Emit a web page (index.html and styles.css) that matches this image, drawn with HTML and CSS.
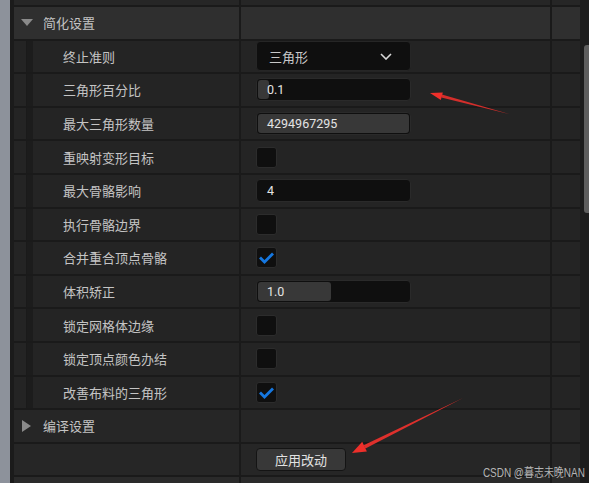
FILE: index.html
```html
<!DOCTYPE html>
<html lang="zh">
<head>
<meta charset="utf-8">
<title>简化设置</title>
<link rel="stylesheet" href="styles.css">
</head>
<body>
<div class="app">
  <div class="sidebar"></div>
  <div class="panel">
    <div class="row strip"><div class="cell"></div><div class="cell"></div><div class="cell"></div></div>

    <div class="row cat">
      <div class="cell name">
        <span class="tw"><svg width="12" height="7" viewBox="0 0 12 7"><polygon points="0,0 12,0 6,7" fill="#8a8a8a"/></svg></span>
        <span class="cat-text">简化设置</span>
      </div>
      <div class="cell"></div><div class="cell"></div>
    </div>

    <div class="row child">
      <div class="cell name"><span class="indent"></span><span class="guide"></span><span class="label">终止准则</span></div>
      <div class="cell val">
        <div class="combo"><span>三角形</span><svg width="12" height="7" viewBox="0 0 12 7"><polyline points="1,1 6,6 11,1" fill="none" stroke="#d8d8d8" stroke-width="1.6"/></svg></div>
      </div>
      <div class="cell"></div>
    </div>

    <div class="row child">
      <div class="cell name"><span class="indent"></span><span class="guide"></span><span class="label">三角形百分比</span></div>
      <div class="cell val"><div class="field"><span class="fill" style="width:11px"></span><span class="num">0.1</span></div></div>
      <div class="cell"></div>
    </div>

    <div class="row child">
      <div class="cell name"><span class="indent"></span><span class="guide"></span><span class="label">最大三角形数量</span></div>
      <div class="cell val"><div class="field"><span class="fill" style="width:151px"></span><span class="num">4294967295</span></div></div>
      <div class="cell"></div>
    </div>

    <div class="row child">
      <div class="cell name"><span class="indent"></span><span class="guide"></span><span class="label">重映射变形目标</span></div>
      <div class="cell val"><div class="check"></div></div>
      <div class="cell"></div>
    </div>

    <div class="row child">
      <div class="cell name"><span class="indent"></span><span class="guide"></span><span class="label">最大骨骼影响</span></div>
      <div class="cell val"><div class="field"><span class="num">4</span></div></div>
      <div class="cell"></div>
    </div>

    <div class="row child">
      <div class="cell name"><span class="indent"></span><span class="guide"></span><span class="label">执行骨骼边界</span></div>
      <div class="cell val"><div class="check"></div></div>
      <div class="cell"></div>
    </div>

    <div class="row child">
      <div class="cell name"><span class="indent"></span><span class="guide"></span><span class="label">合并重合顶点骨骼</span></div>
      <div class="cell val"><div class="check"><svg width="21" height="21" viewBox="0 0 21 21"><polyline points="4,10.5 8.5,15 17,6.5" fill="none" stroke="#1577e0" stroke-width="2.8" stroke-linejoin="miter"/></svg></div></div>
      <div class="cell"></div>
    </div>

    <div class="row child">
      <div class="cell name"><span class="indent"></span><span class="guide"></span><span class="label">体积矫正</span></div>
      <div class="cell val"><div class="field"><span class="fill" style="width:73px"></span><span class="num">1.0</span></div></div>
      <div class="cell"></div>
    </div>

    <div class="row child">
      <div class="cell name"><span class="indent"></span><span class="guide"></span><span class="label">锁定网格体边缘</span></div>
      <div class="cell val"><div class="check"></div></div>
      <div class="cell"></div>
    </div>

    <div class="row child">
      <div class="cell name"><span class="indent"></span><span class="guide"></span><span class="label">锁定顶点颜色办结</span></div>
      <div class="cell val"><div class="check"></div></div>
      <div class="cell"></div>
    </div>

    <div class="row child">
      <div class="cell name"><span class="indent"></span><span class="guide"></span><span class="label">改善布料的三角形</span></div>
      <div class="cell val"><div class="check"><svg width="21" height="21" viewBox="0 0 21 21"><polyline points="4,10.5 8.5,15 17,6.5" fill="none" stroke="#1577e0" stroke-width="2.8" stroke-linejoin="miter"/></svg></div></div>
      <div class="cell"></div>
    </div>

    <div class="row cat2">
      <div class="cell name">
        <span class="tw"><svg width="9" height="12" viewBox="0 0 9 12"><polygon points="0,0 9,6 0,12" fill="#8a8a8a"/></svg></span>
        <span class="cat-text">编译设置</span>
      </div>
      <div class="cell"></div><div class="cell"></div>
    </div>

    <div class="row action">
      <div class="cell"></div>
      <div class="cell val"><button class="apply">应用改动</button></div>
      <div class="cell"></div>
    </div>

    <div class="row tail"><div class="cell"></div><div class="cell"></div><div class="cell"></div></div>
  </div>
  <div class="scroll"><div class="thumb"></div></div>
</div>

<svg class="arrows" width="589" height="483" viewBox="0 0 589 483">
  <polygon points="510,114.3 441.9,94.6 441.3,97.4" fill="#e8302c" opacity="0.9"/>
  <polygon points="430,93 442.8,92.4 440.8,99.9" fill="#ee2f2a"/>
  <polygon points="463,398 363.6,445.3 365.4,448.6" fill="#e8302c" opacity="0.95"/>
  <polygon points="352,453 362.2,441.8 366.9,451.5" fill="#ee2f2a"/>
</svg>
<div class="watermark">CSDN @暮志未晚NAN</div>
</body>
</html>
```

FILE: styles.css
```css
html, body {
  margin: 0;
  padding: 0;
}
body {
  width: 589px;
  height: 483px;
  overflow: hidden;
  background: #1b1b1b;
  font-family: Roboto, "Noto Sans CJK SC", sans-serif;
  color: #c4c4c4;
  position: relative;
}
.app {
  display: flex;
  height: 483px;
}
.sidebar {
  width: 10px;
  background: #8d929b;
  margin-right: 4px;
  flex: none;
}
.panel {
  width: 566px;
  flex: none;
  display: flex;
  flex-direction: column;
}
.row {
  display: grid;
  grid-template-columns: 225px 309px 28px;
  column-gap: 2px;
  height: 33.6px;
  box-sizing: border-box;
  border-bottom: 2px solid #1a1a1a;
  background: #1a1a1a;
  flex: none;
}
.cell {
  background: #242424;
  display: flex;
  align-items: center;
  min-width: 0;
}
.strip {
  height: 7px;
}
.strip .cell {
  background: #262626;
}
.cat .cell {
  background: #2f2f2f;
}
.cat2 .cell,
.action .cell {
  background: #262626;
}
.tail {
  flex: 1;
  border-bottom: 0;
}
.tail .cell {
  background: #2a2a2a;
}
.name {
  font-size: 13px;
  color: #c4c4c4;
}
.cat .name,
.cat2 .name {
  padding-left: 6px;
}
.tw {
  width: 13px;
  height: 13px;
  display: flex;
  align-items: center;
  justify-content: center;
  margin-right: 10px;
}
.tw svg {
  display: block;
}
.child .name {
  align-items: stretch;
}
.indent {
  width: 12px;
  background: #242424;
  flex: none;
}
.guide {
  width: 7px;
  background: #1c1c1c;
  border-left: 1px solid #1a1a1a;
  box-sizing: border-box;
  flex: none;
}
.label {
  display: flex;
  align-items: center;
  padding-left: 30px;
}
.val {
  padding-left: 15px;
}
.combo {
  width: 155px;
  height: 30px;
  box-sizing: border-box;
  background: #0f0f0f;
  border: 1px solid #262626;
  border-radius: 4px;
  display: flex;
  align-items: center;
  justify-content: space-between;
  padding: 0 18px 0 12px;
  font-size: 13px;
  color: #c8c8c8;
}
.combo svg {
  display: block;
}
.field {
  position: relative;
  width: 155px;
  height: 23px;
  box-sizing: border-box;
  background: #0f0f0f;
  border: 1px solid #2a2a2a;
  border-radius: 4px;
  display: flex;
  align-items: center;
}
.fill {
  position: absolute;
  left: 1px;
  top: 1px;
  bottom: 1px;
  background: #383838;
  border-radius: 3px;
}
.num {
  position: relative;
  padding-left: 10px;
  font-size: 12.5px;
  color: #e4e4e4;
}
.check {
  width: 21px;
  height: 21px;
  box-sizing: border-box;
  background: #0f0f0f;
  border: 1px solid #2c2c2c;
  border-radius: 3px;
  position: relative;
}
.check svg {
  position: absolute;
  left: -1px;
  top: -1px;
  display: block;
}
.apply {
  width: 90px;
  height: 23px;
  margin: 0;
  padding: 0;
  box-sizing: border-box;
  background: #383838;
  border: 1px solid #141414;
  border-radius: 4px;
  font-family: Roboto, "Noto Sans CJK SC", sans-serif;
  font-size: 13px;
  color: #e2e2e2;
}
.scroll {
  width: 9px;
  flex: none;
  background: #1c1c1c;
  padding: 45px 0 0 4px;
  box-sizing: border-box;
}
.thumb {
  width: 5px;
  height: 168px;
  background: #5d5d5d;
  border-radius: 3px 0 0 3px;
}
.arrows {
  position: absolute;
  left: 0;
  top: 0;
  pointer-events: none;
}
.watermark {
  position: absolute;
  right: 4px;
  top: 463px;
  font-family: "Liberation Sans", "Noto Sans CJK SC", sans-serif;
  font-size: 12px;
  color: rgba(220, 220, 220, 0.8);
  transform: scaleX(0.83);
  transform-origin: right center;
  white-space: nowrap;
}
```
